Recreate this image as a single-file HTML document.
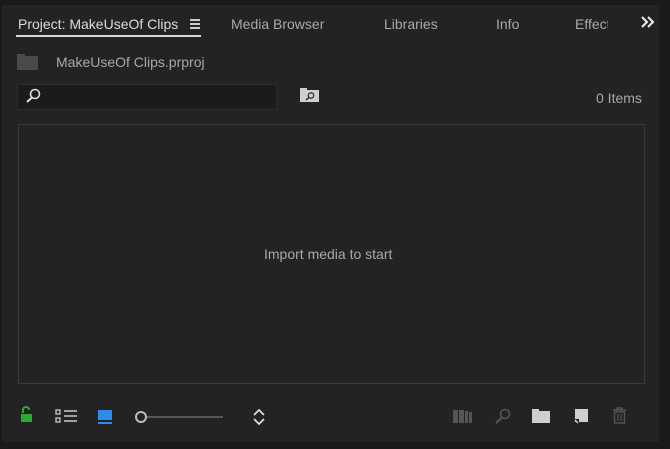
<!DOCTYPE html>
<html><head><style>
body{margin:0;width:670px;height:449px;background:#1a1a1a;position:relative;overflow:hidden;font-family:"Liberation Sans",sans-serif;}
.panel{position:absolute;left:2px;top:5px;width:657px;height:437px;background:#232323;}
.t{position:absolute;color:#a8a8a8;font-size:14px;top:16px;white-space:nowrap;}
.a{position:absolute}
</style></head><body>
<div class="panel"></div>
<div class="t" style="left:18px;color:#dcdcdc">Project: MakeUseOf Clips</div>
<div class="a" style="left:190px;top:19px;width:10px;height:1.5px;background:#ccc;box-shadow:0 4px 0 #ccc,0 8px 0 #ccc"></div>
<div class="a" style="left:16px;top:35px;width:185px;height:2px;background:#d8d8d8"></div>
<div class="t" style="left:231px">Media Browser</div>
<div class="t" style="left:384px">Libraries</div>
<div class="t" style="left:496px">Info</div>
<div class="t" style="left:575px;width:33px;overflow:hidden">Effects</div>
<svg class="a" style="left:641px;top:16px" width="14" height="12"><path d="M1 1l5 5-5 5M7 1l5 5-5 5" stroke="#eee" stroke-width="2" fill="none"/></svg>
<div class="a" style="left:17px;top:56px;width:21px;height:14px;background:#4a4a4a"></div>
<div class="a" style="left:17px;top:54px;width:8px;height:3px;background:#4a4a4a"></div>
<div class="t" style="left:56px;top:54px;color:#a8a8a8">MakeUseOf Clips.prproj</div>
<div class="a" style="left:17px;top:84px;width:258px;height:24px;background:#1b1b1b;border:1px solid #2c2c2c;border-radius:2px"></div>
<svg class="a" style="left:24px;top:88px" width="18" height="16"><circle cx="11" cy="6" r="4.5" stroke="#ddd" stroke-width="1.6" fill="none"/><line x1="8" y1="9.5" x2="3" y2="14" stroke="#ddd" stroke-width="2"/></svg>
<svg class="a" style="left:300px;top:87px" width="20" height="16"><rect x="0" y="3" width="19" height="12" fill="#cfcfcf"/><rect x="0" y="1" width="7" height="3" fill="#cfcfcf"/><circle cx="11" cy="8.5" r="2.7" stroke="#333" stroke-width="1.3" fill="none"/><line x1="9" y1="10.5" x2="6" y2="13" stroke="#333" stroke-width="1.5"/></svg>
<div class="t" style="left:596px;top:90px;color:#a8a8a8">0 Items</div>
<div class="a" style="left:18px;top:124px;width:625px;height:258px;border:1px solid #393939"></div>
<div class="t" style="left:264px;top:246px;color:#a8a8a8">Import media to start</div>
<svg class="a" style="left:20px;top:405px" width="14" height="20"><path d="M3 8V5a3 3 0 0 1 6 0" stroke="#2fa82f" stroke-width="2" fill="none"/><rect x="1" y="9" width="11" height="8" fill="#2fa82f"/><rect x="6" y="11" width="1.5" height="4" fill="#0c3"/></svg>
<svg class="a" style="left:55px;top:409px" width="24" height="16"><rect x="1" y="1" width="4" height="4" stroke="#ccc" fill="none" stroke-width="1.3"/><rect x="1" y="9" width="4" height="4" stroke="#ccc" fill="none" stroke-width="1.3"/><path d="M9 2h13M9 7h13M9 12h13" stroke="#ccc" stroke-width="1.5"/></svg>
<div class="a" style="left:98px;top:410px;width:14px;height:10px;background:#2d8ceb"></div>
<div class="a" style="left:98px;top:422px;width:14px;height:2px;background:#2d8ceb"></div>
<div class="a" style="left:135px;top:411px;width:8px;height:8px;border:2px solid #bbb;border-radius:50%"></div>
<div class="a" style="left:147px;top:416px;width:76px;height:2px;background:#555"></div>
<svg class="a" style="left:251px;top:408px" width="16" height="18"><path d="M3 7l5-5 5 5M3 11l5 5 5-5" stroke="#ddd" stroke-width="1.8" fill="none"/></svg>
<svg class="a" style="left:453px;top:410px" width="22" height="13"><rect x="0" y="0" width="5" height="13" fill="#555"/><rect x="6" y="0" width="5" height="13" fill="#555"/><rect x="12" y="1" width="3" height="12" fill="#555"/><rect x="16" y="2" width="3" height="11" fill="#555"/></svg>
<svg class="a" style="left:494px;top:407px" width="18" height="18"><circle cx="11" cy="7" r="4.5" stroke="#555" stroke-width="1.6" fill="none"/><line x1="8" y1="10.5" x2="2" y2="16" stroke="#555" stroke-width="2"/></svg>
<svg class="a" style="left:532px;top:408px" width="20" height="16"><rect x="0" y="3" width="18" height="12" fill="#cfcfcf"/><rect x="0" y="1" width="7" height="3" fill="#cfcfcf"/></svg>
<svg class="a" style="left:572px;top:408px" width="18" height="17"><rect x="3" y="1" width="13" height="13" fill="#cfcfcf"/><path d="M2 11l5 0 0 5z" fill="#222"/><path d="M3 12l3 3" stroke="#cfcfcf" stroke-width="1.5"/></svg>
<svg class="a" style="left:612px;top:407px" width="16" height="18"><path d="M1 3h13M5 3V1h5v2" stroke="#555" stroke-width="1.4" fill="none"/><rect x="2.5" y="5" width="10" height="11" stroke="#555" stroke-width="1.4" fill="none"/><path d="M6 7v7M9 7v7" stroke="#555" stroke-width="1.2"/></svg>
</body></html>
